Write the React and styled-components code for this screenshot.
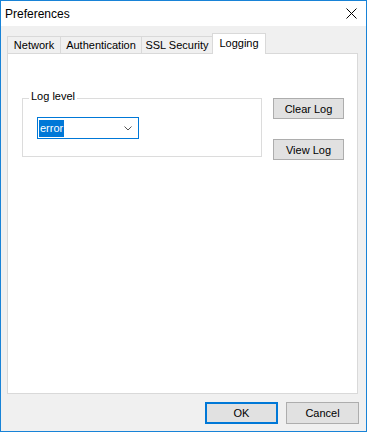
import styled, { createGlobalStyle } from 'styled-components';

const GlobalStyle = createGlobalStyle`
    html, body {
        margin: 0;
        padding: 0;
        background: #ffffff;
    }
    body {
        font-family: "Liberation Sans", Arial, sans-serif;
        color: #000000;
    }
`;

const tabs = [
    { label: 'Network', width: 54 },
    { label: 'Authentication', width: 82 },
    { label: 'SSL Security', width: 72 },
    { label: 'Logging', width: 54, active: true },
];

const App = () => {
    return (
        <>
            <GlobalStyle />
            <Window>
                <TitleBar>
                    <span>Preferences</span>
                    <svg width="11" height="11" viewBox="0 0 11 11">
                        <path d="M0.5 0.5 L10.5 10.5 M10.5 0.5 L0.5 10.5" stroke="#000" strokeWidth="1" fill="none" />
                    </svg>
                </TitleBar>
                <Body>
                    <TabStrip>
                        {tabs.map((t) => (
                            <Tab key={t.label} $w={t.width} $active={t.active}>
                                {t.label}
                            </Tab>
                        ))}
                    </TabStrip>
                    <Panel>
                        <GroupBox>
                            <legend>Log level</legend>
                            <Combo>
                                <Selected>error</Selected>
                                <svg width="8" height="5" viewBox="0 0 8 5">
                                    <polyline points="0.5,0.5 4,4 7.5,0.5" stroke="#555" strokeWidth="1" fill="none" />
                                </svg>
                            </Combo>
                        </GroupBox>
                        <ButtonColumn>
                            <Button $w={71}>Clear Log</Button>
                            <Button $w={71}>View Log</Button>
                        </ButtonColumn>
                    </Panel>
                    <Footer>
                        <Button $w={73} $h={22} $default>OK</Button>
                        <Button $w={73} $h={22}>Cancel</Button>
                    </Footer>
                </Body>
            </Window>
        </>
    );
};

const Window = styled.div`
    width: 367px;
    height: 432px;
    box-sizing: border-box;
    border: 1px solid #1883d7;
    background: #f0f0f0;
    display: flex;
    flex-direction: column;
`;

const TitleBar = styled.div`
    height: 25px;
    flex: none;
    background: #ffffff;
    display: flex;
    align-items: center;
    justify-content: space-between;
    padding: 0 9px 0 4px;
    font-size: 12px;
    svg {
        display: block;
    }
`;

const Body = styled.div`
    flex: 1;
    display: flex;
    flex-direction: column;
    padding: 7px 7px 0 6px;
    min-height: 0;
`;

const TabStrip = styled.div`
    display: flex;
    align-items: flex-end;
    height: 20px;
    flex: none;
`;

const Tab = styled.div`
    box-sizing: border-box;
    width: ${(p) => p.$w}px;
    height: ${(p) => (p.$active ? 21 : 17)}px;
    margin-right: -1px;
    margin-bottom: ${(p) => (p.$active ? -1 : 0)}px;
    border: 1px solid #d9d9d9;
    border-bottom: none;
    background: ${(p) => (p.$active ? '#ffffff' : '#f0f0f0')};
    position: relative;
    z-index: ${(p) => (p.$active ? 2 : 1)};
    display: flex;
    align-items: center;
    justify-content: center;
    font-size: 11px;
    padding-bottom: ${(p) => (p.$active ? 2 : 0)}px;
    white-space: nowrap;
`;

const Panel = styled.div`
    box-sizing: border-box;
    height: 341px;
    flex: none;
    margin-right: 1px;
    background: #ffffff;
    border: 1px solid #d9d9d9;
    display: flex;
    align-items: flex-start;
    padding: 36px 0 0 14px;
`;

const GroupBox = styled.fieldset`
    box-sizing: border-box;
    width: 240px;
    margin: 0;
    padding: 0;
    min-width: 0;
    border: 1px solid #dcdcdc;
    legend {
        margin-left: 6px;
        padding: 0 2px 3px 2px;
        font-size: 11px;
        line-height: 13px;
    }
`;

const Combo = styled.div`
    box-sizing: border-box;
    width: 102px;
    height: 22px;
    margin: 11px 0 17px 14px;
    border: 1px solid #0078d7;
    background: #ffffff;
    display: flex;
    align-items: center;
    justify-content: space-between;
    padding: 0 6px 0 1px;
    svg {
        display: block;
    }
`;

const Selected = styled.span`
    background: #0078d7;
    color: #ffffff;
    font-size: 11px;
    line-height: 17px;
    padding: 0 1px;
`;

const ButtonColumn = styled.div`
    display: flex;
    flex-direction: column;
    gap: 20px;
    margin: 8px 0 0 11px;
`;

const Button = styled.button`
    box-sizing: border-box;
    width: ${(p) => p.$w}px;
    height: ${(p) => p.$h || 21}px;
    margin: 0;
    padding: 0;
    background: #e1e1e1;
    border: ${(p) => (p.$default ? '2px solid #0078d7' : '1px solid #adadad')};
    border-radius: 0;
    font-family: "Liberation Sans", Arial, sans-serif;
    font-size: 11px;
    color: #000000;
`;

const Footer = styled.div`
    display: flex;
    justify-content: flex-end;
    gap: 8px;
    padding-top: 8px;
`;

export default App;
